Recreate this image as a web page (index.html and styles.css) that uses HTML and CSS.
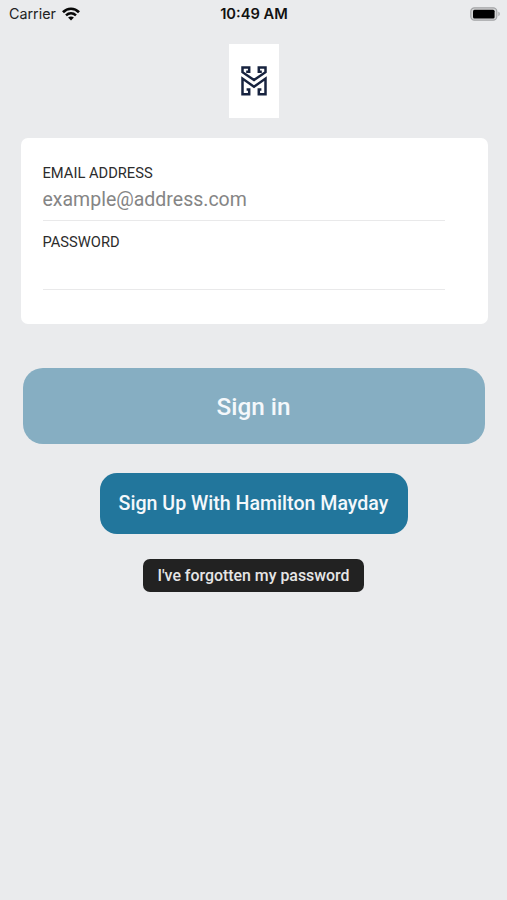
FILE: index.html
```
<!DOCTYPE html>
<html lang="en">
<head>
    <meta charset="UTF-8">
    <meta name="viewport" content="width=device-width, initial-scale=1.0">
    <title>Sign in</title>
    <link rel="stylesheet" href="styles.css">
</head>
<body>
    <header class="status-bar">
        <div class="carrier">
            <span>Carrier</span>
            <svg class="wifi" viewBox="0 0 18 14" width="18" height="14">
                <path d="M1 5.2C5.5.6 12.5.6 17 5.2" fill="none" stroke="#080808" stroke-width="2.7"/>
                <path d="M4 8.4C7 5.6 11 5.6 14 8.4" fill="none" stroke="#080808" stroke-width="2.5"/>
                <path d="M6.1 10.6C7.8 9.1 10.2 9.1 11.9 10.6L9 13.5z" fill="#080808"/>
            </svg>
        </div>
        <span class="time">10:49 AM</span>
        <svg class="battery" viewBox="0 0 31 14" width="31" height="14">
            <rect x=".8" y=".8" width="26" height="12.4" rx="3.6" fill="#d4d5d6" stroke="#a3a4a6" stroke-width="1.2"/>
            <rect x="3" y="2.8" width="21.6" height="8.6" rx="1.5" fill="#000"/>
            <path d="M28.4 4.8c1.8.6 1.8 3.8 0 4.4z" fill="#a3a4a6"/>
        </svg>
    </header>
    <div class="logo">
        <svg viewBox="0 0 26 30" width="26" height="30">
            <g fill="none" stroke="#17233f" stroke-width="2.5">
                <path d="M5.2 5.8H8.2V1.6H1.5V6.2L13 14 24.5 6.2V1.6H17.8V5.8H20.8"/>
                <path d="M5.6 23.6H8.2V28.3H1.5V12.6L13 20.8 24.5 12.6V28.3H17.8V23.6H20.4"/>
            </g>
        </svg>
    </div>
    <form class="login-form">
        <div class="fields">
            <label for="emailInput">EMAIL ADDRESS</label>
            <input id="emailInput" type="email" placeholder="example@address.com">
            <label for="passwordInput">PASSWORD</label>
            <input id="passwordInput" type="password">
        </div>
        <button class="sign-in" type="button">Sign in</button>
        <button class="sign-up" type="button">Sign Up With Hamilton Mayday</button>
        <button class="forgot" type="button">I've forgotten my password</button>
    </form>
</body>
</html>
```
FILE: styles.css
```
* {
    box-sizing: border-box;
}

body {
    background-color: #eaebed;
    font-family: Roboto, sans-serif;
    margin: 0;
    height: 100vh;
    overflow: hidden;
}

.status-bar {
    display: grid;
    grid-template-columns: 1fr auto 1fr;
    align-items: center;
    height: 27px;
    padding: 0 6px 0 9px;
    font-family: Inter, sans-serif;
    font-size: 14.3px;
    color: #222;
}

.carrier {
    display: flex;
    align-items: center;
    gap: 6px;
}

.time {
    margin-right: 2px;
    font-size: 14.7px;
    font-weight: 600;
    color: #111;
}

.battery {
    justify-self: end;
}

.logo {
    display: flex;
    align-items: center;
    justify-content: center;
    width: 50px;
    height: 74px;
    margin: 17px auto 0;
    background-color: #fff;
}

.login-form {
    display: flex;
    flex-direction: column;
    align-items: center;
    margin-top: 19.5px;
}

.fields {
    display: flex;
    flex-direction: column;
    width: 467px;
    height: 186.5px;
    margin-left: 1px;
    padding: 26px 42px 0 22px;
    background-color: #fff;
    border-radius: 7px;
}

.fields label {
    height: 18px;
    font-size: 14.7px;
    line-height: 18px;
    color: #2c2c2c;
}

.fields input {
    width: 402.5px;
    height: 39.5px;
    margin-bottom: 11.5px;
    padding: 0 0 3px;
    border: none;
    border-bottom: 1.5px solid #e9e9ea;
    outline: none;
    background: none;
    font-family: inherit;
    font-size: 19.5px;
}

.fields input::placeholder {
    color: #858585;
}

.login-form button {
    padding: 0;
    border: none;
    font-family: inherit;
    font-weight: 500;
    color: #f4f8fb;
    cursor: pointer;
}

.login-form .sign-in {
    width: 462px;
    height: 76px;
    margin-top: 44px;
    border-radius: 20px;
    background-color: #86aec2;
    font-size: 24.3px;
}

.login-form .sign-up {
    width: 308px;
    height: 61px;
    margin-top: 29px;
    border-radius: 17px;
    background-color: #22769c;
    font-size: 19.6px;
}

.login-form .forgot {
    width: 221px;
    height: 33px;
    margin-top: 25px;
    border-radius: 7px;
    background-color: #222;
    font-size: 15.9px;
    color: #e6e6e6;
}
```
